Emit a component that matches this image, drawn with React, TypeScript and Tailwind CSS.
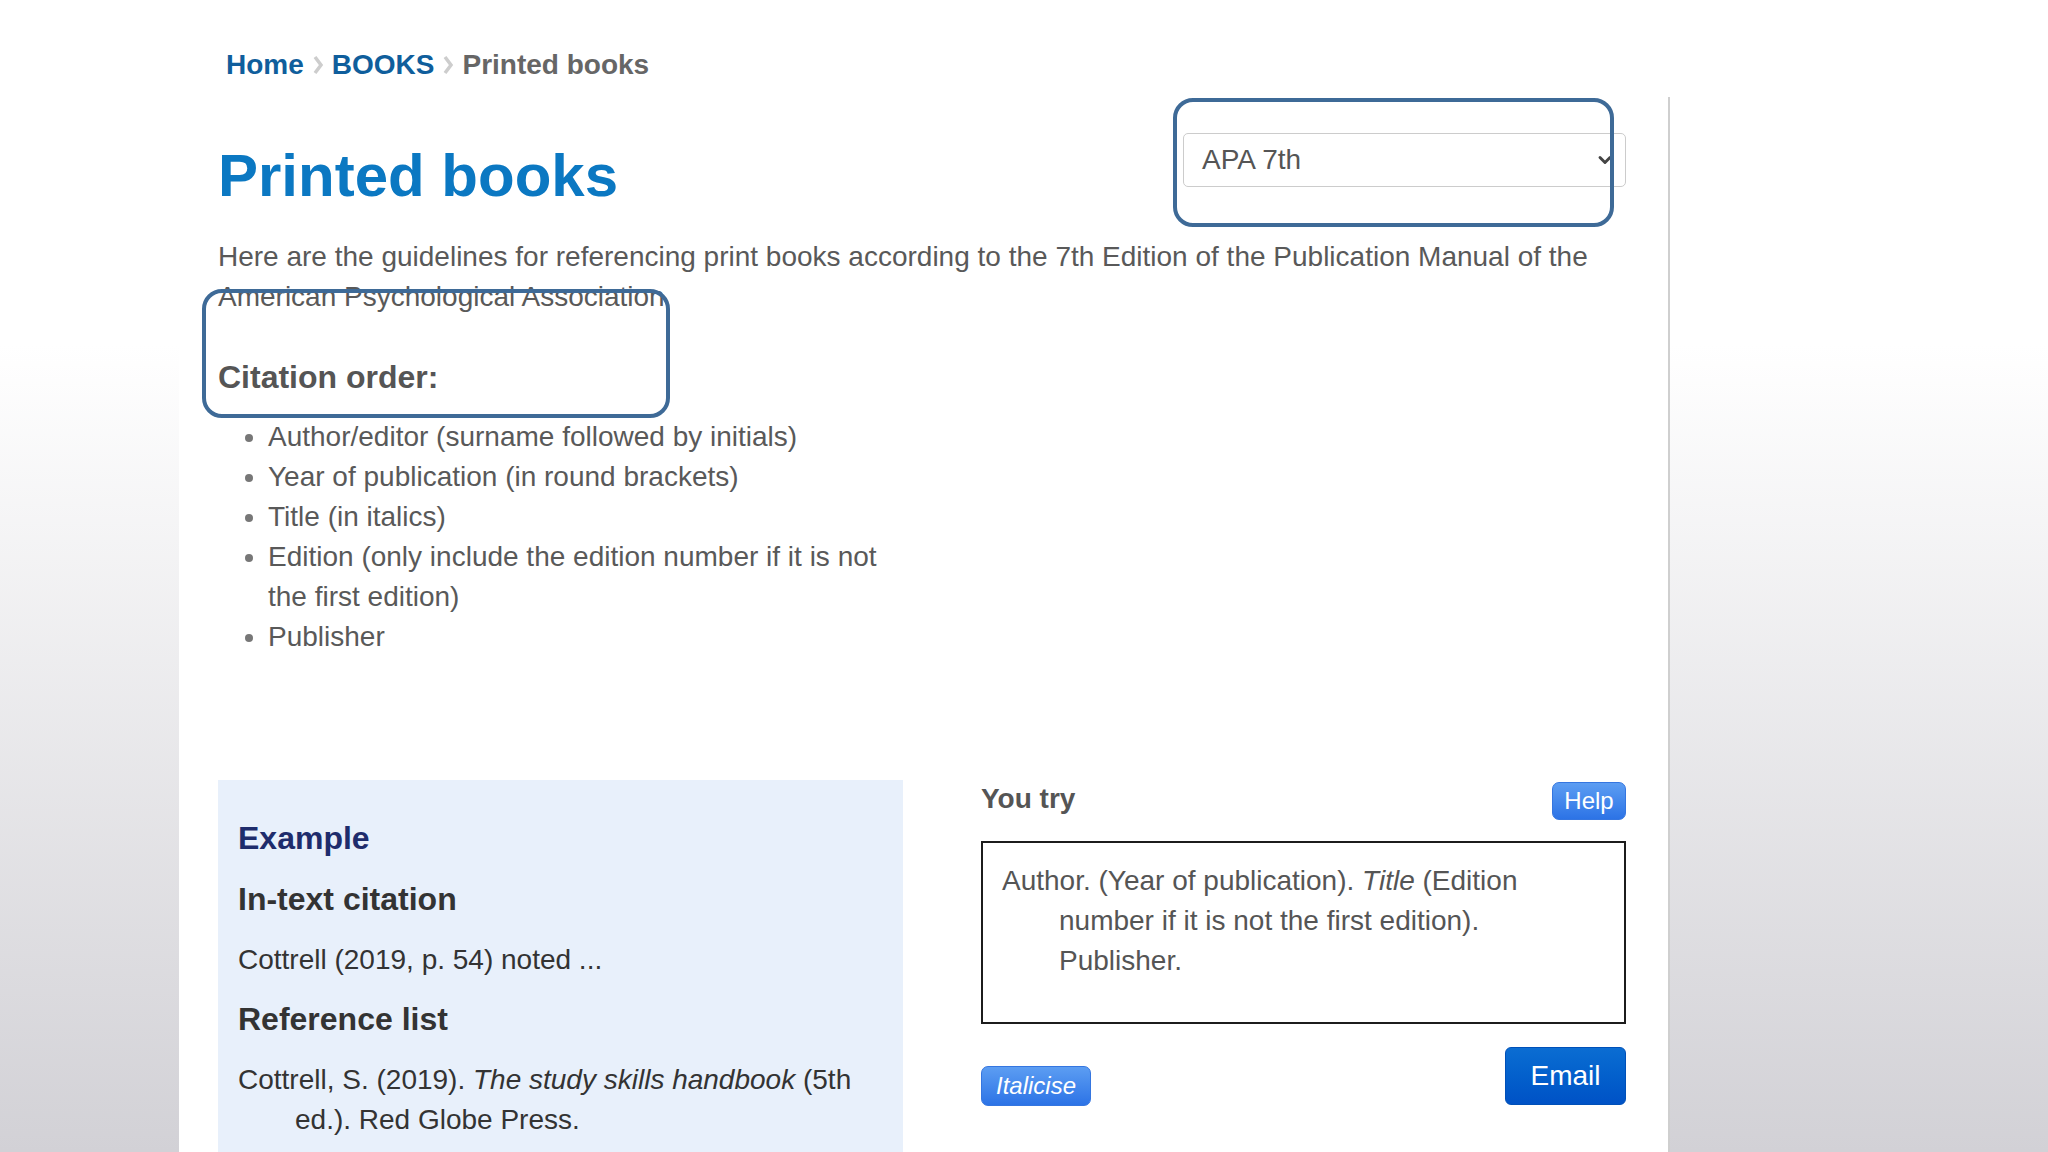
import { ChevronDown } from "lucide-react";

const citationOrder: string[] = [
  "Author/editor (surname followed by initials)",
  "Year of publication (in round brackets)",
  "Title (in italics)",
  "Edition (only include the edition number if it is not the first edition)",
  "Publisher",
];

function Separator() {
  return (
    <svg width="12" height="20" viewBox="0 0 12 20" className="mx-[8px] inline-block align-[-1px]">
      <path d="M3 2 L9 10 L3 18" fill="none" stroke="#cdcdcd" strokeWidth="3.5" />
    </svg>
  );
}

function Breadcrumb() {
  return (
    <div className="h-[97px] pl-[47px] pt-[45px] text-[28px] font-bold leading-[40px]">
      <span className="text-[#0f5e9c]">Home</span>
      <Separator />
      <span className="text-[#0f5e9c]">BOOKS</span>
      <Separator />
      <span className="text-[#666666]">Printed books</span>
    </div>
  );
}

function StyleSelect() {
  return (
    <div className="flex h-[54px] w-[443px] items-center justify-between rounded-[5px] border border-[#cccccc] bg-white pl-[18px] pr-[10px] text-[28px] text-[#555555]">
      <span>APA 7th</span>
      <ChevronDown size={20} strokeWidth={3.5} className="text-[#444444]" />
    </div>
  );
}

function ExampleBox() {
  return (
    <div className="mt-px bg-[#e8f0fb] px-[20px] pt-[38px] pb-[40px] leading-[40px] text-[28px] text-[#333333]">
      <h3 className="mb-[21px] text-[32px] font-bold text-[#1e2c6c]">Example</h3>
      <h4 className="mb-[21px] text-[32px] font-bold">In-text citation</h4>
      <p className="mb-[19px]">Cottrell (2019, p. 54) noted ...</p>
      <h4 className="mb-[21px] text-[32px] font-bold">Reference list</h4>
      <p className="pl-[57px] -indent-[57px]">
        Cottrell, S. (2019). <i>The study skills handbook</i> (5th ed.). Red Globe Press.
      </p>
    </div>
  );
}

function YouTry() {
  return (
    <div>
      <div className="flex h-[42px] items-start justify-between">
        <span className="text-[28px] font-bold leading-[40px] text-[#555555]">You try</span>
        <button className="mt-[3px] h-[38px] w-[74px] rounded-[7px] border border-[#3576e0] bg-linear-to-b from-[#5c9df2] to-[#2c73e6] text-[24px] text-white">
          Help
        </button>
      </div>
      <div className="mt-[20px] h-[183px] border-2 border-[#1c1c1c] bg-white pl-[19px] pr-[19px] pt-[18px] text-[28px] leading-[40px] text-[#555555]">
        <p className="pl-[57px] -indent-[57px]">
          Author. (Year of publication). <i>Title</i> (Edition number if it is not the first edition). Publisher.
        </p>
      </div>
      <div className="mt-[23px] flex items-end justify-between">
        <button className="mb-[-1px] h-[40px] w-[110px] rounded-[7px] border border-[#3576e0] bg-linear-to-b from-[#5c9df2] to-[#2c73e6] text-[24px] italic text-white">
          Italicise
        </button>
        <button className="h-[58px] w-[121px] rounded-[6px] border border-[#0050b8] bg-linear-to-b from-[#0b6dd2] to-[#0052c6] text-[28px] text-white">
          Email
        </button>
      </div>
    </div>
  );
}

export default function App() {
  return (
    <div className="relative h-[1152px] w-[2048px] overflow-hidden bg-linear-to-b from-white from-30% to-[#d2d1d6] font-['Liberation_Sans',Arial,sans-serif]">
      <div className="ml-[179px] h-full w-[1491px] bg-white">
        <Breadcrumb />
        <main className="h-full border-r-2 border-[#cfcfcf] pl-[39px] pr-[42px]">
          <div className="flex items-start justify-between pt-[36px]">
            <h1 className="mt-[10px] text-[60px] font-bold leading-[66px] text-[#0b78c2]">Printed books</h1>
            <StyleSelect />
          </div>

          <p className="mt-[28px] text-[28px] leading-[40px] text-[#595959]">
            Here are the guidelines for referencing print books according to the 7th Edition of the Publication Manual of the American Psychological Association
          </p>

          <h2 className="mt-[40px] text-[32px] font-bold leading-[40px] text-[#555555]">Citation order:</h2>

          <ul className="mt-[20px] w-[685px] list-disc pl-[50px] text-[28px] leading-[40px] text-[#595959] marker:text-[#777777]">
            {citationOrder.map((item) => (
              <li key={item}>{item}</li>
            ))}
          </ul>

          <div className="mt-[122px] flex items-start justify-between">
            <div className="w-[685px]">
              <ExampleBox />
            </div>
            <div className="w-[645px]">
              <YouTry />
            </div>
          </div>
        </main>
      </div>

      {/* annotation outlines drawn over the page */}
      <div className="absolute left-[1173px] top-[98px] h-[129px] w-[441px] rounded-[20px] border-4 border-[#3e6a97]" />
      <div className="absolute left-[202px] top-[289px] h-[129px] w-[468px] rounded-[20px] border-4 border-[#3e6a97]" />
    </div>
  );
}
